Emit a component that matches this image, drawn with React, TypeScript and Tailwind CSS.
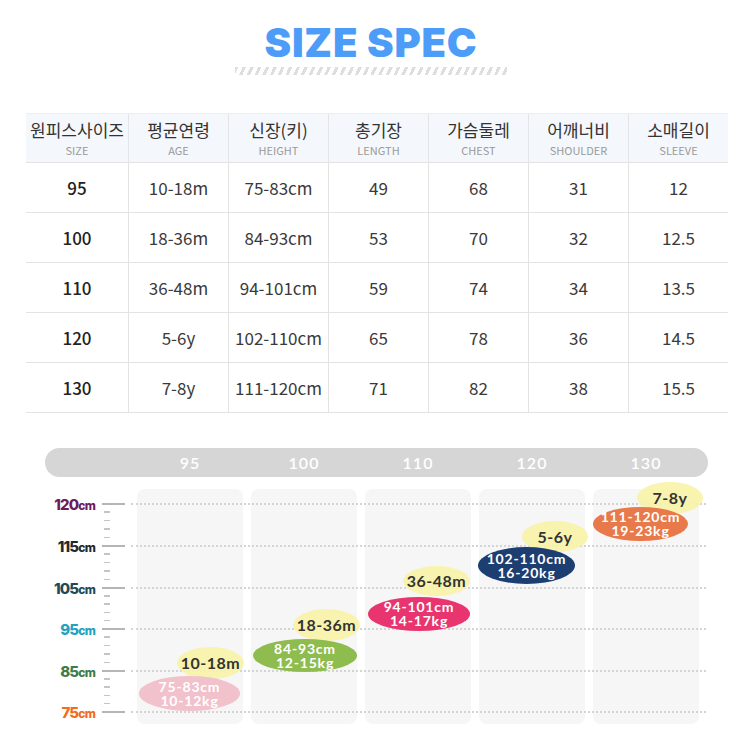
import React from "react";

const headers = [
  { ko: "원피스사이즈", en: "SIZE" },
  { ko: "평균연령", en: "AGE" },
  { ko: "신장(키)", en: "HEIGHT" },
  { ko: "총기장", en: "LENGTH" },
  { ko: "가슴둘레", en: "CHEST" },
  { ko: "어깨너비", en: "SHOULDER" },
  { ko: "소매길이", en: "SLEEVE" },
];

const rows = [
  ["95", "10-18m", "75-83cm", "49", "68", "31", "12"],
  ["100", "18-36m", "84-93cm", "53", "70", "32", "12.5"],
  ["110", "36-48m", "94-101cm", "59", "74", "34", "13.5"],
  ["120", "5-6y", "102-110cm", "65", "78", "36", "14.5"],
  ["130", "7-8y", "111-120cm", "71", "82", "38", "15.5"],
];

const axis = [
  { label: "120", color: "text-[#6e1c5f]", top: 55 },
  { label: "115", color: "text-[#1f2a30]", top: 97 },
  { label: "105", color: "text-[#1d4b5c]", top: 139 },
  { label: "95", color: "text-[#22a2bd]", top: 180 },
  { label: "85", color: "text-[#3d7d4a]", top: 222 },
  { label: "75", color: "text-[#f26b21]", top: 263 },
];

// chart bubbles, coords relative to chart box
const ages = [
  { text: "10-18m", left: 132, top: 199, w: 67, h: 32 },
  { text: "18-36m", left: 248, top: 161, w: 67, h: 32 },
  { text: "36-48m", left: 358, top: 118, w: 67, h: 30 },
  { text: "5-6y", left: 477, top: 73, w: 66, h: 31 },
  { text: "7-8y", left: 592, top: 34, w: 66, h: 32 },
];

const bodies = [
  { a: "75-83cm", b: "10-12kg", bg: "bg-[#f1c2cc]", left: 94, top: 228, w: 101, h: 35 },
  { a: "84-93cm", b: "12-15kg", bg: "bg-[#8fbc4e]", left: 208, top: 191, w: 104, h: 33 },
  { a: "94-101cm", b: "14-17kg", bg: "bg-[#e8356f]", left: 323, top: 149, w: 102, h: 34 },
  { a: "102-110cm", b: "16-20kg", bg: "bg-[#1c3e70]", left: 433, top: 99, w: 97, h: 37 },
  { a: "111-120cm", b: "19-23kg", bg: "bg-[#e8794a]", left: 548, top: 59, w: 95, h: 34 },
];

const sizes = ["95", "100", "110", "120", "130"];

const cjk = "font-['Noto_Sans_CJK_KR','Noto_Sans',sans-serif]";

export default function App() {
  const majors = axis.map((a) => a.top);
  const minors: number[] = [];
  for (let i = 0; i < majors.length - 1; i++) {
    const step = (majors[i + 1] - majors[i]) / 5;
    for (let k = 1; k < 5; k++) minors.push(majors[i] + step * k);
  }

  return (
    <div className="w-[742px] h-[742px] overflow-hidden bg-white">
      {/* title */}
      <div className="pt-[20px] flex flex-col items-center">
        <div className="font-['Inter',sans-serif] font-black text-[40px] leading-[46px] tracking-[0.8px] text-[#4d9cf8]">
          SIZE SPEC
        </div>
        <div className="mt-[1px] h-[8px] w-[272px] bg-[repeating-linear-gradient(115deg,#dedede_0_3px,transparent_3px_7px)]" />
      </div>

      {/* table */}
      <div className={`mt-[38px] ml-[26px] w-[702px] ${cjk}`}>
        <div className="grid grid-cols-[102px_repeat(6,100px)] bg-[#f4f7fb] border-t border-[#eceff3] border-b border-b-[#e3e3e3] h-[50px]">
          {headers.map((h, i) => (
            <div
              key={h.en}
              className={`flex flex-col items-center justify-center ${i > 0 ? "border-l border-[#e3e5e8]" : ""}`}
            >
              <span className="text-[17px] leading-[20px] text-[#333]">{h.ko}</span>
              <span className="text-[11px] leading-[14px] mt-[3px] text-[#9a9a9a]">{h.en}</span>
            </div>
          ))}
        </div>
        {rows.map((r) => (
          <div
            key={r[0]}
            className="grid grid-cols-[102px_repeat(6,100px)] h-[50px] border-b border-[#e3e3e3]"
          >
            {r.map((c, i) => (
              <div
                key={i}
                className={`flex items-center justify-center text-[17px] ${
                  i === 0 ? "font-medium text-[#222]" : "text-[#3a3a3a]"
                } ${i > 0 ? "border-l border-[#e3e3e3]" : ""}`}
              >
                {c}
              </div>
            ))}
          </div>
        ))}
      </div>

      {/* chart */}
      <div className="relative mt-[35px] ml-[45px] w-[663px] h-[293px] font-['Lato',sans-serif]">
        <div className="h-[29px] rounded-full bg-[#d6d6d6] grid grid-cols-[84px_repeat(5,106px)] gap-x-[8px] items-center">
          <div />
          {sizes.map((s) => (
            <div key={s} className="text-center text-white font-semibold text-[16px] tracking-[1px]">
              {s}
            </div>
          ))}
        </div>
        <div className="mt-[12px] grid grid-cols-[84px_repeat(5,106px)] gap-x-[8px] h-[235px]">
          <div />
          {sizes.map((s) => (
            <div key={s} className="rounded-lg bg-[#f6f6f7]" />
          ))}
        </div>

        {/* axis */}
        {axis.map((a) => (
          <React.Fragment key={a.label}>
            <div
              className={`absolute left-0 w-[50px] text-right font-['Inter',sans-serif] font-extrabold text-[15px] leading-[16px] tracking-[-0.8px] ${a.color}`}
              style={{ top: a.top - 6 }}
            >
              {a.label}
              <span className="text-[12px]">cm</span>
            </div>
            <div className="absolute left-[57px] w-[23px] h-[1.5px] bg-[#b5b5b5]" style={{ top: a.top }} />
            <div
              className="absolute left-[86px] w-[575px] border-t-2 border-dotted border-[#d4d4d4]"
              style={{ top: a.top }}
            />
          </React.Fragment>
        ))}
        {minors.map((t, i) => (
          <div key={i} className="absolute left-[59px] w-[6px] h-[1.5px] bg-[#c4c4c4]" style={{ top: t }} />
        ))}

        {/* age bubbles */}
        {ages.map((a) => (
          <div
            key={a.text}
            className="absolute flex items-center justify-center rounded-[50%] bg-[#f8f3a6]/90 text-[#333] font-bold text-[16px] leading-[18px] tracking-[0.5px]"
            style={{ left: a.left, top: a.top, width: a.w, height: a.h }}
          >
            {a.text}
          </div>
        ))}

        {/* height / weight bubbles */}
        {bodies.map((b) => (
          <div
            key={b.a}
            className={`absolute flex flex-col items-center justify-center rounded-[50%] text-white font-bold text-[14px] leading-[14px] tracking-[0.8px] ${b.bg}`}
            style={{ left: b.left, top: b.top, width: b.w, height: b.h }}
          >
            <span>{b.a}</span>
            <span>{b.b}</span>
          </div>
        ))}
      </div>
    </div>
  );
}
